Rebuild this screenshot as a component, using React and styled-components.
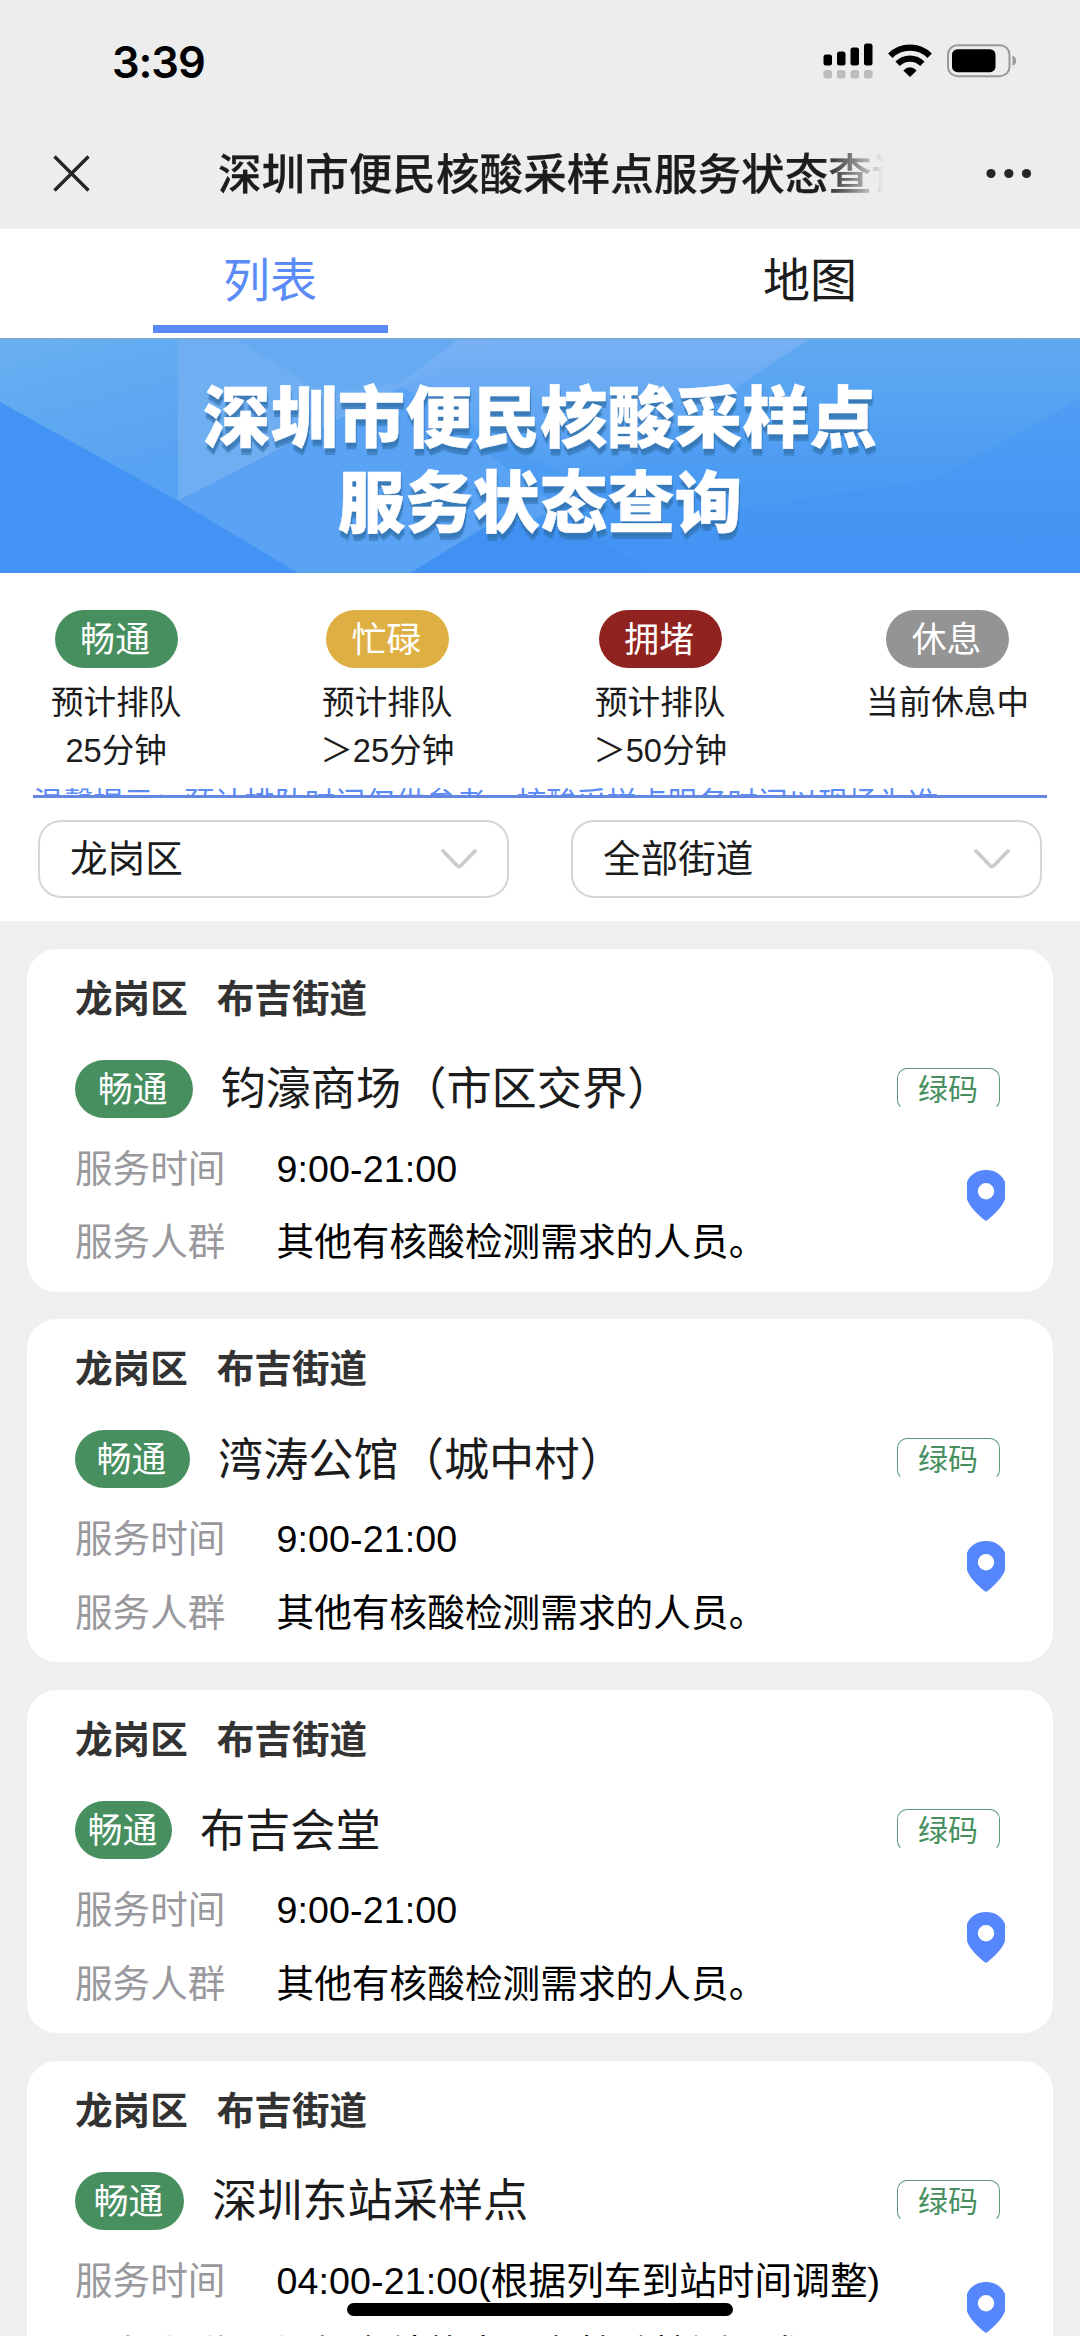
import React from 'react';
import styled, { createGlobalStyle } from 'styled-components';

const GlobalStyle = createGlobalStyle`
  * {
    box-sizing: border-box;
  }
  body {
    margin: 0;
    background: #efefef;
    font-family: 'Liberation Sans', 'Noto Sans CJK SC', sans-serif;
    color: #1c1c1c;
  }
`;

const Page = styled.div`
  position: relative;
  width: 1080px;
  height: 2336px;
  overflow: hidden;
  display: flex;
  flex-direction: column;
`;

const Header = styled.header`
  flex: none;
  height: 229px;
  background: #ededed;
`;

const StatusBar = styled.div`
  display: flex;
  align-items: center;
  justify-content: space-between;
  height: 122px;
  padding: 0 63px 0 112px;
`;

const Clock = styled.div`
  font-family: Inter, sans-serif;
  font-size: 43.5px;
  font-weight: 600;
  line-height: 60px;
  letter-spacing: -1.1px;
  padding-top: 1px;
  color: #000;
`;

const StatusIcons = styled.svg`
  display: block;
  width: 194px;
  height: 36px;
`;

const NavBar = styled.div`
  display: flex;
  align-items: center;
  height: 103px;
  padding: 0 48px 0 53px;
`;

const NavIcon = styled.svg`
  flex: none;
  display: block;
  width: ${(props) => props.$width}px;
  height: 37px;
`;

const NavTitle = styled.div`
  width: 672px;
  margin: 0 98px 0 128px;
  overflow: hidden;
  white-space: nowrap;
  font-size: 43.6px;
  font-weight: 500;
  line-height: 64px;
  padding-top: 3px;
  -webkit-text-stroke: 0.25px #1c1c1c;
  mask-image: linear-gradient(to right, #000 605px, transparent 666px);
`;

const Tabs = styled.div`
  flex: none;
  display: flex;
  height: 109px;
  background: #fff;
`;

const Tab = styled.div`
  flex: 1;
  display: flex;
  flex-direction: column;
  align-items: center;
  font-size: 47px;
  line-height: 96px;
  padding-top: 4px;
  color: ${(props) => (props.$active ? '#5b8bf7' : '#1c1c1c')};

  &::after {
    content: '';
    width: 235px;
    height: 8px;
    margin-top: -4px;
    background: ${(props) => (props.$active ? '#5b8bf7' : 'transparent')};
  }
`;

const Banner = styled.div`
  position: relative;
  flex: none;
  height: 235px;
  overflow: hidden;
`;

const BannerArt = styled.svg`
  position: absolute;
  inset: 0;
  width: 1080px;
  height: 235px;
`;

const BannerTitle = styled.h1`
  position: relative;
  margin: 0;
  padding-top: 39px;
  text-align: center;
  font-size: 67.4px;
  font-weight: 900;
  line-height: 84.5px;
  color: #fff;
  -webkit-text-stroke: 0.5px #fff;
  text-shadow: 1px 4px 1px rgba(48, 112, 170, 0.5),
    1px 7px 1px rgba(48, 112, 170, 0.6);
`;

const Panel = styled.section`
  flex: none;
  height: 348px;
  background: #fff;
`;

const Legend = styled.div`
  display: flex;
  justify-content: space-between;
  height: 214px;
  padding: 37px 51px 0;
`;

const LegendItem = styled.div`
  display: flex;
  flex-direction: column;
  align-items: center;
  font-size: 32.6px;
  line-height: 48px;
  white-space: nowrap;
`;

const Badge = styled.span`
  flex: none;
  display: flex;
  align-items: center;
  justify-content: center;
  width: ${(props) => props.$width || 123}px;
  height: 58px;
  border-radius: 29px;
  background: ${(props) => props.$color || '#478f5f'};
  color: #fff;
  font-size: 34.8px;
  line-height: 58px;
  padding: 2px 2px 0 0;
`;

const LegendText = styled.div`
  margin-top: ${(props) => (props.$first ? 11 : 0)}px;
`;

const Tip = styled.div`
  height: 11px;
  margin: 0 33px;
  overflow: hidden;
  border-bottom: 3px solid #6487e2;
  color: #5b8bf7;
  font-size: 30.2px;
  line-height: 33px;
  white-space: nowrap;
`;

const Selects = styled.div`
  display: flex;
  justify-content: space-between;
  padding: 22px 38px 0;
`;

const Select = styled.div`
  display: flex;
  align-items: center;
  justify-content: space-between;
  width: 471px;
  height: 78px;
  padding: 0 29px 0 30px;
  border: 2px solid #d6d6d6;
  border-radius: 23px;
  font-size: 37.6px;
  line-height: 74px;
`;

const Chevron = styled.svg`
  display: block;
  width: 38px;
  height: 22px;
`;

const List = styled.main`
  flex: none;
  display: flex;
  flex-direction: column;
  gap: 27.6px;
  padding: 27.5px 27px 0;
`;

const Card = styled.article`
  display: flex;
  flex-direction: column;
  height: 343.2px;
  padding: 26px 48px 0;
  border-radius: 30px;
  background: #fff;
`;

const Area = styled.div`
  display: flex;
  gap: 29px;
  height: 48px;
  font-size: 37.6px;
  font-weight: 700;
  line-height: 48px;
  color: #333;
`;

const SiteRow = styled.div`
  display: flex;
  align-items: center;
  height: 58px;
  margin-top: 37px;
`;

const SiteName = styled.h2`
  flex: 1;
  margin: 0 0 0 28px;
  font-size: 45.2px;
  font-weight: 400;
  line-height: 58px;
  padding-top: 3px;
  white-space: nowrap;
`;

const CodeTag = styled.span`
  width: 103px;
  height: 42px;
  margin-right: 5px;
  padding-right: 1px;
  border: 1.5px solid #5c9a76;
  border-bottom-color: transparent;
  border-radius: 10px;
  text-align: center;
  font-size: 30px;
  line-height: 41px;
  color: #478f5f;
`;

const Details = styled.div`
  display: flex;
  justify-content: space-between;
  margin-top: 14px;
`;

const InfoRow = styled.div`
  display: flex;
  height: 73.5px;
  font-size: 37.6px;
  line-height: 74px;
  white-space: nowrap;
  color: #000;
`;

const InfoLabel = styled.span`
  width: 201.5px;
  color: #98989d;
`;

const InfoValue = styled.span`
  letter-spacing: 0.1px;
`;

const Pin = styled.svg`
  flex: none;
  display: block;
  width: 38px;
  height: 51px;
  margin-top: 38.5px;
`;

const HomeIndicator = styled.div`
  position: absolute;
  left: 347px;
  bottom: 20px;
  width: 386px;
  height: 13px;
  border-radius: 7px;
  background: #000;
`;

const legend = [
  { label: '畅通', color: '#478f5f', lines: ['预计排队', '25分钟'] },
  { label: '忙碌', color: '#deb044', lines: ['预计排队', '＞25分钟'] },
  { label: '拥堵', color: '#902320', lines: ['预计排队', '＞50分钟'] },
  { label: '休息', color: '#949494', lines: ['当前休息中'] },
];

const sites = [
  {
    name: '钧濠商场（市区交界）',
    badgeWidth: 117.5,
    time: '9:00-21:00',
    people: '其他有核酸检测需求的人员。',
  },
  {
    name: '湾涛公馆（城中村）',
    badgeWidth: 115,
    time: '9:00-21:00',
    people: '其他有核酸检测需求的人员。',
  },
  {
    name: '布吉会堂',
    badgeWidth: 97,
    time: '9:00-21:00',
    people: '其他有核酸检测需求的人员。',
  },
  {
    name: '深圳东站采样点',
    badgeWidth: 109,
    time: '04:00-21:00(根据列车到站时间调整)',
    people: '深圳东站旅客、有核酸检测需求',
  },
];

const Dropdown = ({ value }) => (
  <Select>
    {value}
    <Chevron viewBox="0 0 38 22" fill="none">
      <path
        d="M3 3 L17 17.5 Q19 19.5 21 17.5 L35 3"
        stroke="#ccc"
        strokeWidth="3.8"
        strokeLinecap="round"
      />
    </Chevron>
  </Select>
);

const SiteCard = ({ site }) => (
  <Card>
    <Area>
      <span>龙岗区</span>
      <span>布吉街道</span>
    </Area>
    <SiteRow>
      <Badge $width={site.badgeWidth}>畅通</Badge>
      <SiteName>{site.name}</SiteName>
      <CodeTag>绿码</CodeTag>
    </SiteRow>
    <Details>
      <div>
        <InfoRow>
          <InfoLabel>服务时间</InfoLabel>
          <InfoValue>{site.time}</InfoValue>
        </InfoRow>
        <InfoRow>
          <InfoLabel>服务人群</InfoLabel>
          <InfoValue>{site.people}</InfoValue>
        </InfoRow>
      </div>
      <Pin viewBox="0 0 38 51">
        <path
          fillRule="evenodd"
          fill="#5686fb"
          d="M19 0 C28 0 35 4.5 38 12 V29 C36 36 27 45 20.5 50 Q19 51.3 17.5 50 C11 45 2 36 0 29 V12 C3 4.5 10 0 19 0 Z M19 13 A8.2 8.2 0 1 0 19 29.4 A8.2 8.2 0 1 0 19 13 Z"
        />
      </Pin>
    </Details>
  </Card>
);

const App = () => {
  return (
    <>
      <GlobalStyle />
      <Page>
        <Header>
          <StatusBar>
            <Clock>3:39</Clock>
            <StatusIcons viewBox="0 0 194 36">
              <rect x="0.5" y="11.5" width="8.5" height="11" rx="2.5" />
              <rect x="14" y="8.5" width="8.5" height="14" rx="2.5" />
              <rect x="27.5" y="4.5" width="8.5" height="18" rx="2.5" />
              <rect x="41" y="0.5" width="8.5" height="22" rx="2.5" />
              <g fill="#bdbdbd">
                <rect x="0.5" y="27" width="8.5" height="8.5" rx="2.5" />
                <rect x="14" y="27" width="8.5" height="8.5" rx="2.5" />
                <rect x="27.5" y="27" width="8.5" height="8.5" rx="2.5" />
                <rect x="41" y="27" width="8.5" height="8.5" rx="2.5" />
              </g>
              <g fill="none" stroke="#000" strokeWidth="6.2">
                <path d="M67.3 12.8 A28 28 0 0 1 106.7 12.8" />
                <path d="M74.6 20.8 A17.5 17.5 0 0 1 99.4 20.8" />
              </g>
              <path d="M87 34 L80.3 27.4 Q87 21 93.7 27.4 Z" />
              <rect
                x="125"
                y="2.2"
                width="61.5"
                height="31"
                rx="9.5"
                fill="none"
                stroke="#999"
                strokeWidth="2"
              />
              <rect x="129" y="6.2" width="43.5" height="23" rx="5.5" />
              <path d="M189.5 12.8 Q193 14 193 17.7 Q193 21.5 189.5 22.6 Z" fill="#999" />
            </StatusIcons>
          </StatusBar>
          <NavBar>
            <NavIcon $width={37} viewBox="0 0 37 37">
              <path
                d="M1.5 1.5 L35.5 35.5 M35.5 1.5 L1.5 35.5"
                stroke="#262626"
                strokeWidth="3.4"
              />
            </NavIcon>
            <NavTitle>深圳市便民核酸采样点服务状态查询</NavTitle>
            <NavIcon $width={46} viewBox="0 0 46 37" fill="#262626">
              <circle cx="5" cy="18.5" r="4.6" />
              <circle cx="22.8" cy="18.5" r="4.6" />
              <circle cx="40.5" cy="18.5" r="4.6" />
            </NavIcon>
          </NavBar>
        </Header>

        <Tabs>
          <Tab $active>列表</Tab>
          <Tab>地图</Tab>
        </Tabs>

        <Banner>
          <BannerArt viewBox="0 0 1080 235" preserveAspectRatio="none">
            <defs>
              <linearGradient id="sky" x1="0" y1="0" x2="0" y2="1">
                <stop offset="0" stopColor="#61aaf1" />
                <stop offset="0.6" stopColor="#4b9bf3" />
                <stop offset="1" stopColor="#4193f3" />
              </linearGradient>
              <linearGradient id="facet" x1="0" y1="0" x2="0" y2="1">
                <stop offset="0" stopColor="#7ab1f4" />
                <stop offset="1" stopColor="#5aa3f2" stopOpacity="0.2" />
              </linearGradient>
              <linearGradient id="left" x1="0" y1="0" x2="0.3" y2="1">
                <stop offset="0" stopColor="#69b0f1" />
                <stop offset="1" stopColor="#57a2f2" />
              </linearGradient>
            </defs>
            <rect width="1080" height="235" fill="url(#sky)" />
            <path d="M0 0 H178 V163 L0 64 Z" fill="url(#left)" />
            <path d="M0 64 L178 163 L298 235 H0 Z" fill="#4293f4" />
            <path d="M178 0 H500 L400 50 L178 163 Z" fill="#70aef2" />
            <path d="M234 0 L325 56 L400 45 L460 0 Z" fill="#66abf2" />
            <path d="M178 163 L400 50 L560 170 L410 235 H298 Z" fill="#5aa2f3" />
            <path d="M460 0 H810 L720 60 L590 150 L400 48 Z" fill="url(#facet)" />
            <path d="M410 235 L500 180 L590 195 L650 235 Z" fill="#4091f2" />
            <path d="M590 195 L940 140 L1080 60 V235 H650 Z" fill="#4394f4" opacity="0.4" />
            <rect width="1080" height="1.5" fill="#79a9cf" />
          </BannerArt>
          <BannerTitle>
            深圳市便民核酸采样点
            <br />
            服务状态查询
          </BannerTitle>
        </Banner>

        <Panel>
          <Legend>
            {legend.map((item) => (
              <LegendItem key={item.label}>
                <Badge $color={item.color}>{item.label}</Badge>
                {item.lines.map((line, i) => (
                  <LegendText key={line} $first={i === 0}>
                    {line}
                  </LegendText>
                ))}
              </LegendItem>
            ))}
          </Legend>
          <Tip>温馨提示：预计排队时间仅供参考，核酸采样点服务时间以现场为准</Tip>
          <Selects>
            <Dropdown value="龙岗区" />
            <Dropdown value="全部街道" />
          </Selects>
        </Panel>

        <List>
          {sites.map((site) => (
            <SiteCard key={site.name} site={site} />
          ))}
        </List>
        <HomeIndicator />
      </Page>
    </>
  );
};

export default App;
